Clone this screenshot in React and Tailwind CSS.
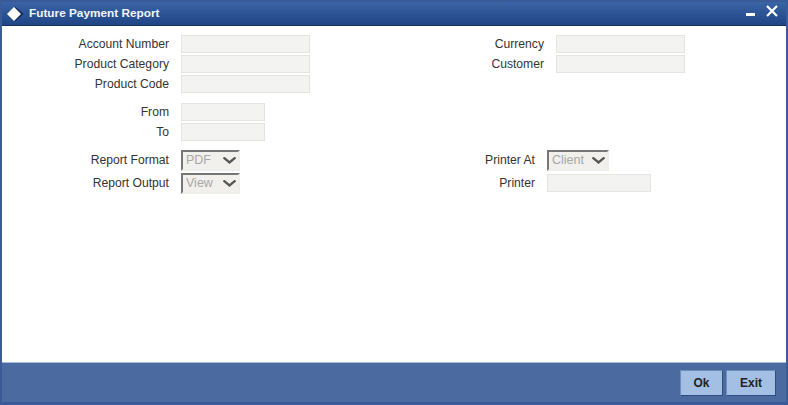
const font = { fontFamily: '"Liberation Sans", Arial, sans-serif' };

function Label({ children, w, className = "" }) {
  return <div className={`${w} shrink-0 text-right text-[12.15px] leading-[18px] text-[#333333] ${className}`}>{children}</div>;
}

function Input({ w = "w-[129px]" }) {
  return <div className={`${w} h-[18px] shrink-0 border border-[#e4e4e0] bg-[#f3f3f1]`} />;
}

function Row({ label, labelW, w }) {
  return (
    <div className="flex items-center gap-3">
      <Label w={labelW}>{label}</Label>
      <Input w={w} />
    </div>
  );
}

function Select({ value, w }) {
  return (
    <div className={`${w} flex h-[21px] shrink-0 items-center justify-between border-2 border-b-[#eeeeea] border-r-[#eeeeea] border-l-[#777777] border-t-[#777777] bg-[#f1f0ec] pl-[3px] pr-[2px] text-[12.5px] text-[#a8a8a8]`}>
      <span>{value}</span>
      <svg width="13" height="7" viewBox="0 0 13 7" fill="none">
        <path d="M0.5 0.5 L6.5 5.5 L12.5 0.5" stroke="#555555" strokeWidth="2.3" />
      </svg>
    </div>
  );
}

function SelectRow({ label, labelW, value, w }) {
  return (
    <div className="flex items-center gap-3">
      <Label w={labelW} className="pb-[2px]">{label}</Label>
      <Select value={value} w={w} />
    </div>
  );
}

export default function App() {
  return (
    <div style={font} className="flex h-[405px] w-[788px] flex-col overflow-hidden border-2 border-[#3a5b97] border-b-[3px] bg-white">
      <div className="flex h-[24px] shrink-0 items-center justify-between border-b border-[#16305f] bg-gradient-to-b from-[#3b64a6] to-[#1f4585] pl-[4px] pr-[8px]">
        <div className="flex items-center gap-[5px]">
          <svg width="18" height="16" viewBox="0 0 18 16">
            <path d="M9 0.5 L17.5 8 L9 15.5 Z" fill="#0d2a55" />
            <path d="M8 1 L15 8 L8 15 L1 8 Z" fill="#ffffff" />
          </svg>
          <span className="text-[11.8px] font-bold text-[#f2f5fa]">Future Payment Report</span>
        </div>
        <div className="mt-[3px] flex items-start gap-[11px] self-start">
          <div className="mt-[8px] h-[3px] w-[9px] bg-white" />
          <svg width="12" height="12" viewBox="0 0 12 12">
            <path d="M1 1 L11 11 M11 1 L1 11" stroke="#ffffff" strokeWidth="2.2" />
          </svg>
        </div>
      </div>

      <div className="flex min-h-0 flex-1 flex-col">
        <div className="flex pt-[9px]">
          <div className="flex w-[420px] flex-col gap-[2px]">
            <Row label="Account Number" labelW="w-[167px]" />
            <Row label="Product Category" labelW="w-[167px]" />
            <Row label="Product Code" labelW="w-[167px]" />
          </div>
          <div className="flex flex-col gap-[2px]">
            <Row label="Currency" labelW="w-[122px]" />
            <Row label="Customer" labelW="w-[122px]" />
          </div>
        </div>

        <div className="mt-[10px] flex flex-col gap-[2px]">
          <Row label="From" labelW="w-[167px]" w="w-[84px]" />
          <Row label="To" labelW="w-[167px]" w="w-[84px]" />
        </div>

        <div className="mt-[9px] flex">
          <div className="flex w-[420px] flex-col gap-[2px]">
            <SelectRow label="Report Format" labelW="w-[167px]" value="PDF" w="w-[59px]" />
            <SelectRow label="Report Output" labelW="w-[167px]" value="View" w="w-[59px]" />
          </div>
          <div className="flex flex-col gap-[2px]">
            <SelectRow label="Printer At" labelW="w-[113px]" value="Client" w="w-[62px]" />
            <div className="flex h-[21px] items-center pb-[2px]">
              <Row label="Printer" labelW="w-[113px]" w="w-[104px]" />
            </div>
          </div>
        </div>
      </div>

      <div className="flex h-[40px] shrink-0 items-center justify-end gap-[3px] border-t border-[#a9bbdb] bg-[#4b6a9f] pr-[10px]">
        <button className="h-[26px] w-[43px] border border-[#6f8db9] border-b-[#2f4c7e] border-r-[#2f4c7e] bg-[#a3bfe3] text-[12px] font-bold text-[#222222]">Ok</button>
        <button className="h-[26px] w-[50px] border border-[#6f8db9] border-b-[#2f4c7e] border-r-[#2f4c7e] bg-[#a3bfe3] text-[12px] font-bold text-[#222222]">Exit</button>
      </div>
    </div>
  );
}
